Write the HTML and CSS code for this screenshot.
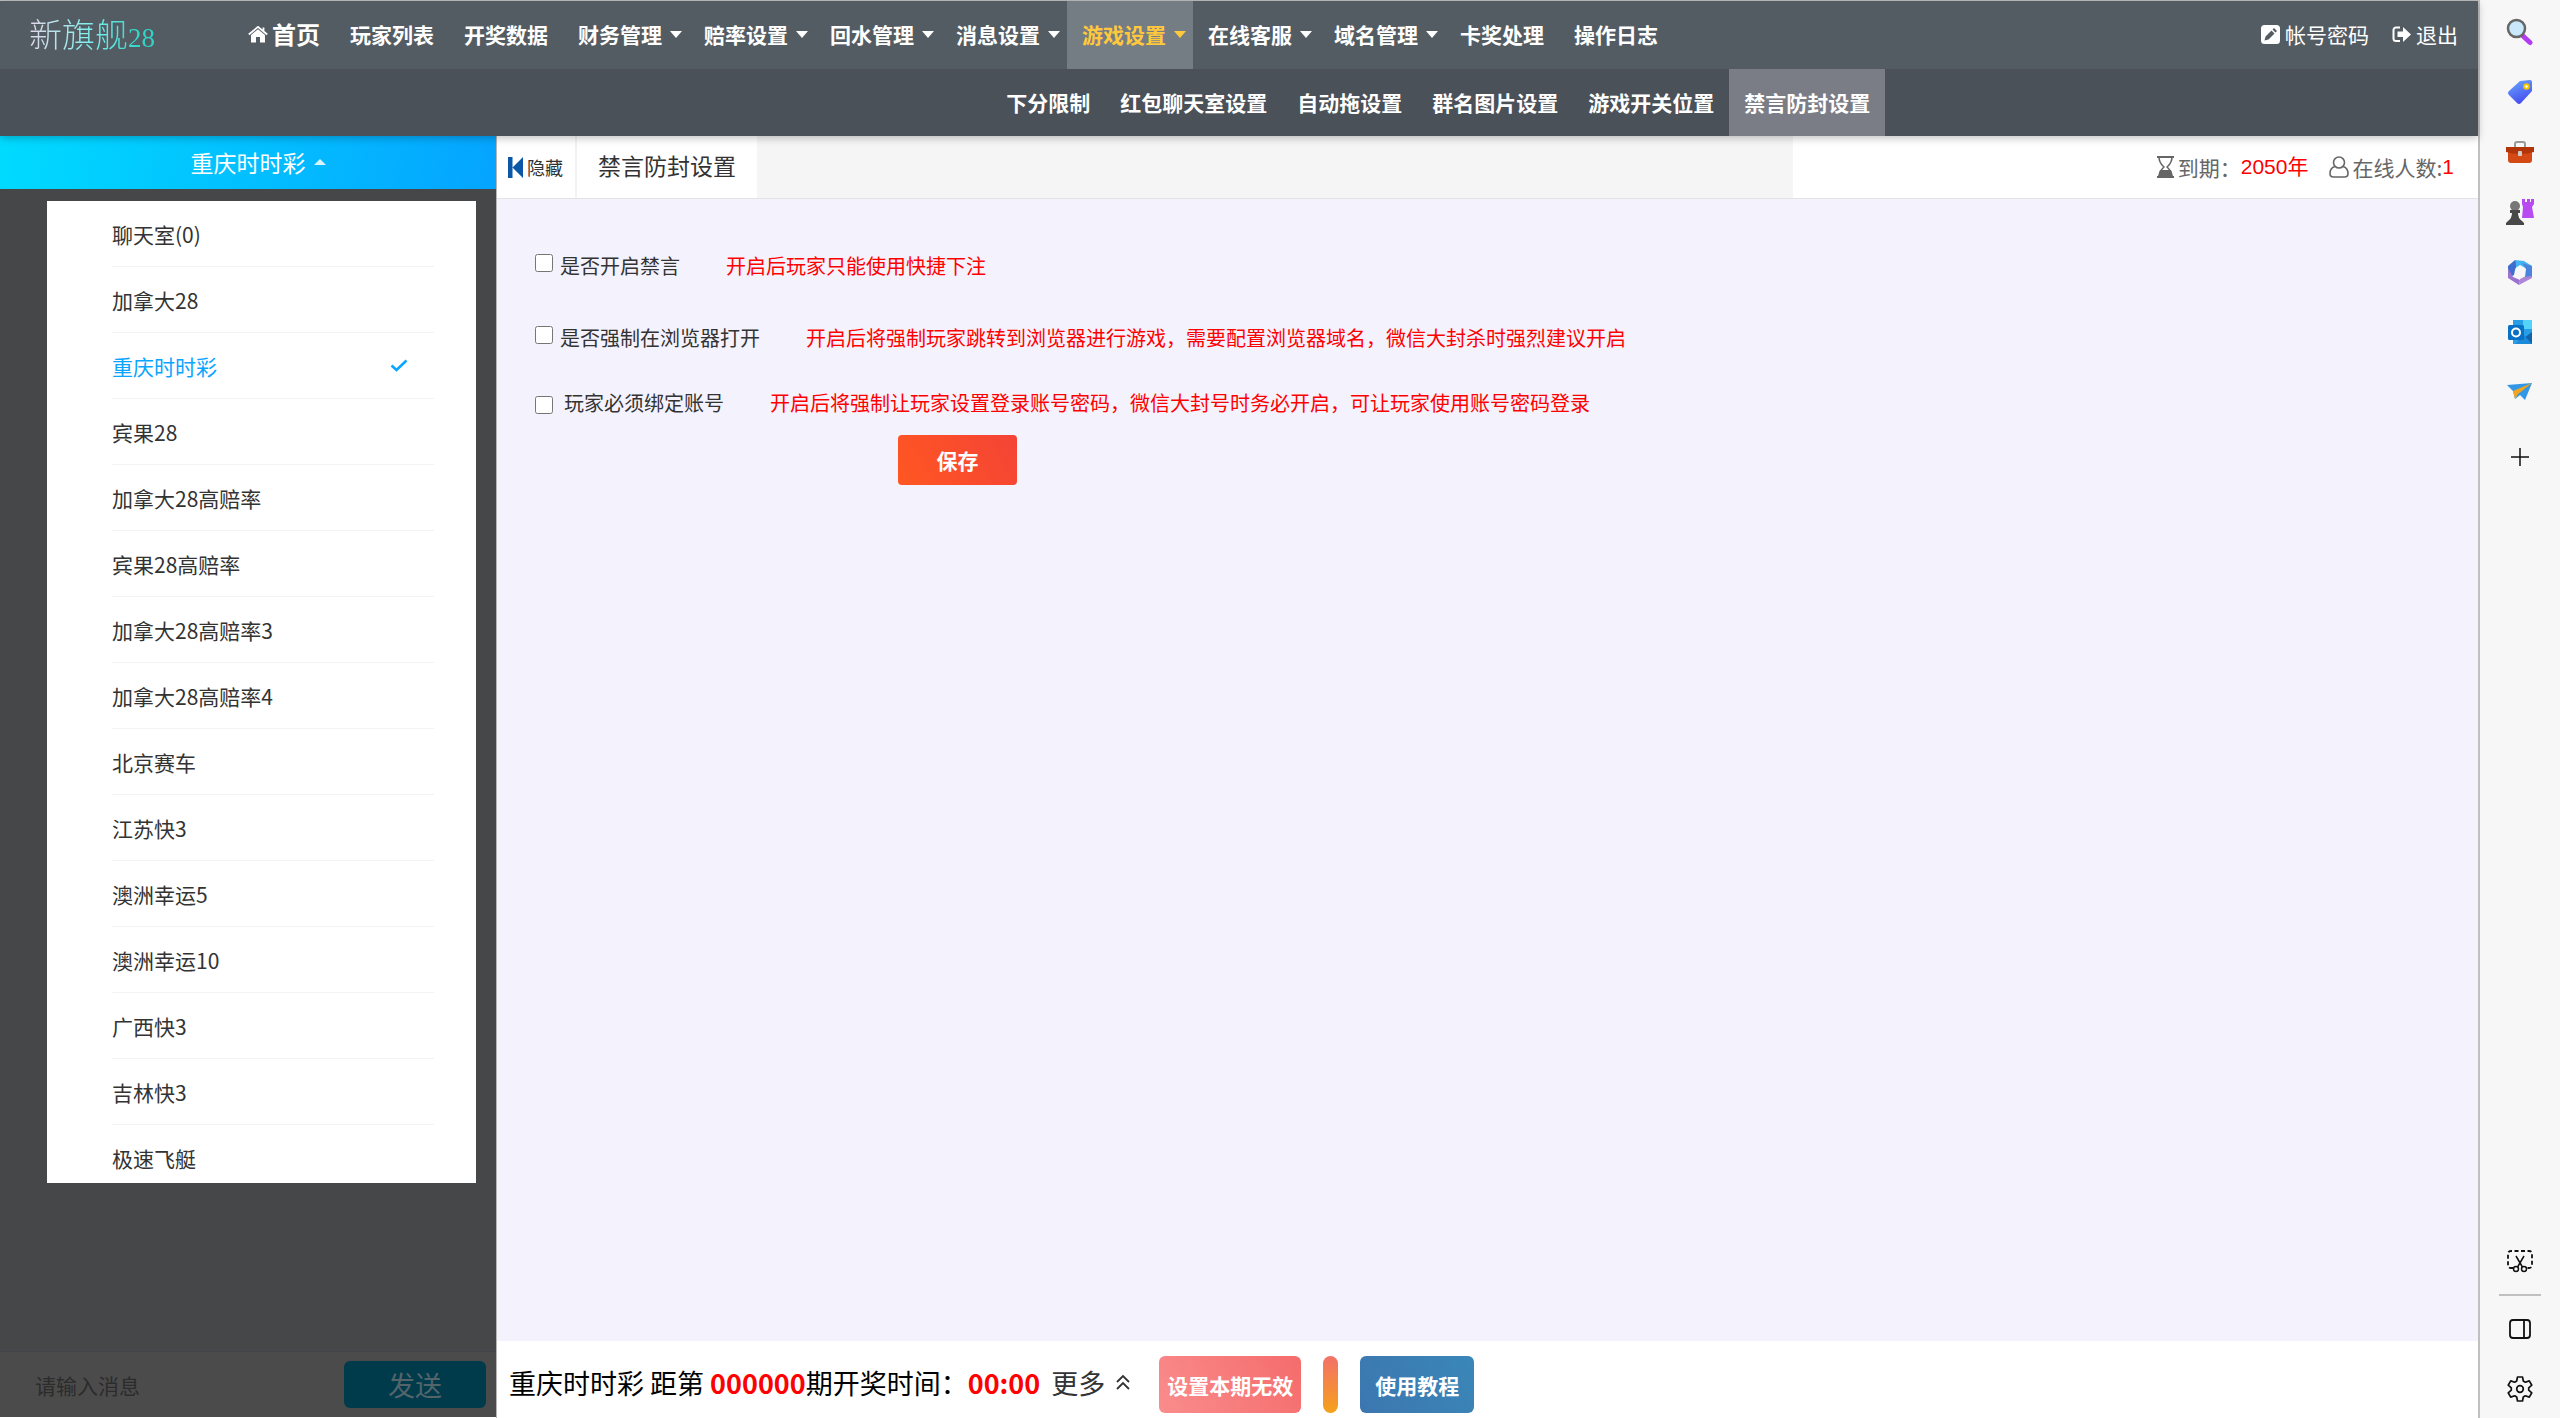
FILE: index.html
```html
<!DOCTYPE html>
<html lang="zh-CN">
<head>
<meta charset="utf-8">
<title>禁言防封设置</title>
<link rel="stylesheet" href="styles.css">
</head>
<body>
<div class="app">
  <header class="header">
    <div class="topbar">
      <div class="logo">新旗舰<span class="logo-num">28</span></div>
      <nav class="nav">
        <a class="nav-item nav-home" href="#"><svg width="20" height="17" viewBox="0 0 20 17"><path d="M10 3.2 3 9v7.5h5V11h4v5.500h5V9z" fill="#fff"/><path d="M.8 8.500 10 .9l9.200 7.600M15.500 1.500v4" fill="none" stroke="#fff" stroke-width="1.800"/></svg>首页</a>
        <a class="nav-item" href="#">玩家列表</a>
        <a class="nav-item" href="#">开奖数据</a>
        <a class="nav-item has-menu" href="#">财务管理</a>
        <a class="nav-item has-menu" href="#">赔率设置</a>
        <a class="nav-item has-menu" href="#">回水管理</a>
        <a class="nav-item has-menu" href="#">消息设置</a>
        <a class="nav-item has-menu active" href="#">游戏设置</a>
        <a class="nav-item has-menu" href="#">在线客服</a>
        <a class="nav-item has-menu" href="#">域名管理</a>
        <a class="nav-item" href="#">卡奖处理</a>
        <a class="nav-item" href="#">操作日志</a>
      </nav>
      <div class="account">
        <a href="#"><svg width="19" height="19" viewBox="0 0 19 19"><rect width="19" height="19" rx="3.500" fill="#fff"/><path d="m3.500 15.500 1-4 6-6 3 3-6 6zM11.500 4.500l1.500-1.500 3 3-1.500 1.500z" fill="#545c63"/></svg>帐号密码</a>
        <a href="#"><svg width="19" height="17" viewBox="0 0 19 17"><path d="M8 1.500H4A2.500 2.500 0 0 0 1.500 4v8.500A2.500 2.500 0 0 0 4 15h4" fill="none" stroke="#fff" stroke-width="2"/><path d="M5.500 5.500h5.500V1l8 7.500-8 7.500v-5H5.500z" fill="#fff"/></svg>退出</a>
      </div>
    </div>
    <nav class="subnav">
      <a href="#">下分限制</a>
      <a href="#">红包聊天室设置</a>
      <a href="#">自动拖设置</a>
      <a href="#">群名图片设置</a>
      <a href="#">游戏开关位置</a>
      <a class="active" href="#">禁言防封设置</a>
    </nav>
  </header>
  <div class="body">
    <aside class="side">
      <button class="side-head" type="button">重庆时时彩<span class="caret-up"></span></button>
      <ul class="games">
        <li><a href="#">聊天室(0)</a></li>
        <li><a href="#">加拿大28</a></li>
        <li class="current"><a href="#">重庆时时彩<svg width="18" height="14" viewBox="0 0 18 14"><path d="M1.500 6.500 6.500 11 16.500 1.500" fill="none" stroke="#0aa5ff" stroke-width="2.500"/></svg></a></li>
        <li><a href="#">宾果28</a></li>
        <li><a href="#">加拿大28高赔率</a></li>
        <li><a href="#">宾果28高赔率</a></li>
        <li><a href="#">加拿大28高赔率3</a></li>
        <li><a href="#">加拿大28高赔率4</a></li>
        <li><a href="#">北京赛车</a></li>
        <li><a href="#">江苏快3</a></li>
        <li><a href="#">澳洲幸运5</a></li>
        <li><a href="#">澳洲幸运10</a></li>
        <li><a href="#">广西快3</a></li>
        <li><a href="#">吉林快3</a></li>
        <li><a href="#">极速飞艇</a></li>
      </ul>
      <form class="chat">
        <input type="text" placeholder="请输入消息" aria-label="请输入消息">
        <button type="button">发送</button>
      </form>
    </aside>
    <main class="main">
      <div class="tabs">
        <button class="hide-btn" type="button"><svg width="16" height="21" viewBox="0 0 16 21"><path d="M0 0h4.500v21H0zM15 0v21L4.500 10.500z" fill="#0b56a6"/></svg>隐藏</button>
        <div class="tab">禁言防封设置</div>
        <div class="status">
          <span class="stat"><svg width="19" height="22" viewBox="0 0 19 22"><path d="M1 1h17M1 21h17" stroke="#666" stroke-width="2"/><path d="M3 1c0 6 3 8 5 10-2 2-5 4-5 10h13c0-6-3-8-5-10 2-2 5-4 5-10" fill="none" stroke="#666" stroke-width="1.500"/><path d="M4 14h11l2 7H2z" fill="#666"/></svg>到期：<b class="stat-value">2050年</b></span>
          <span class="stat"><svg width="20" height="22" viewBox="0 0 20 22"><g fill="none" stroke="#666" stroke-width="1.600"><circle cx="10" cy="6.500" r="5.500"/><path d="M6 10.500c-3.500 1-5 3.500-5 7 0 2.500 1.500 3.500 3.500 3.500h11c2 0 3.500-1 3.500-3.500 0-3.500-1.500-6-5-7"/></g></svg>在线人数:<b class="stat-value">1</b></span>
        </div>
      </div>
      <form class="settings">
        <div class="setting"><input type="checkbox" id="mute"><label for="mute">是否开启禁言</label><span class="hint">开启后玩家只能使用快捷下注</span></div>
        <div class="setting"><input type="checkbox" id="browser"><label for="browser">是否强制在浏览器打开</label><span class="hint">开启后将强制玩家跳转到浏览器进行游戏，需要配置浏览器域名，微信大封杀时强烈建议开启</span></div>
        <div class="setting setting-bind"><input type="checkbox" id="bind"><label for="bind">玩家必须绑定账号</label><span class="hint">开启后将强制让玩家设置登录账号密码，微信大封号时务必开启，可让玩家使用账号密码登录</span></div>
        <button class="save" type="button">保存</button>
      </form>
      <footer class="footer">
        <div class="draw">重庆时时彩 距第 <b>000000</b>期开奖时间：<b>00:00</b></div>
        <a class="more" href="#">更多<svg width="16" height="17" viewBox="0 0 16 17"><path d="m2 8 6-6 6 6M2 15l6-6 6 6" fill="none" stroke="#333" stroke-width="1.800"/></svg></a>
        <button class="btn btn-void" type="button">设置本期无效</button>
        <button class="btn-pill" type="button" aria-label="开关"></button>
        <button class="btn btn-guide" type="button">使用教程</button>
      </footer>
    </main>
  </div>
</div>
<aside class="rail">
  <svg width="28" height="28" viewBox="0 0 28 28"><path d="m17 18 7 6.500" stroke="#b23cf0" stroke-width="5" stroke-linecap="round"/><circle cx="10.500" cy="10.500" r="8.500" fill="#c9e8fb" stroke="#666" stroke-width="2.500"/></svg>
  <svg width="28" height="28" viewBox="0 0 28 28"><defs><linearGradient id="tag" x2=".4" y2="1"><stop stop-color="#6aabff"/><stop offset="1" stop-color="#4650ef"/></linearGradient></defs><path d="M14 3 24 2q2 0 2 2v9L15 25q-2 2-4 0l-8-8q-2-2 0-4z" fill="url(#tag)"/><circle cx="20.500" cy="8.500" r="2.300" fill="#fff" stroke="#f5c400" stroke-width="2"/></svg>
  <svg width="28" height="28" viewBox="0 0 28 28"><path d="M9 9V6q0-2 2-2h6q2 0 2 2v3" fill="none" stroke="#999" stroke-width="2"/><path d="M2 11h24v11q0 3-3 3H5q-3 0-3-3z" fill="#d54a14"/><path d="M0 9h28v5q-14 4-28 0z" fill="#b23409"/><rect x="12" y="13" width="4" height="5" rx="1" fill="#ccc"/></svg>
  <svg width="28" height="28" viewBox="0 0 28 28"><path d="M16 1h3v3h2V1h3v3h1V1h3v5l-2 3 2 11H16l1-11-1-3z" fill="#b84af2"/><circle cx="9" cy="8" r="5" fill="#777"/><path d="M4 12h10v3h-2q0 5 4 8l2 2v2H0v-2l2-2q4-3 4-8H4z" fill="#484848"/></svg>
  <svg width="28" height="28" viewBox="0 0 28 28"><path d="M9 2 18 3l8 5v9l-5-6-7-4-6 4z" fill="#43b5f3"/><path d="M2 8 9 2q2 6 0 10l-1 5-6 3z" fill="#3f6fcd"/><path d="m2 10 5 9 7 3-1 5L2 20z" fill="#9a72cf"/><path d="m13 27 1-6 6-3 6-2v4z" fill="#ad86d8"/><path d="m26 8v10l-7 1 1-8-4-6z" fill="#4b84dc"/><circle cx="14" cy="14.500" r="4.500" fill="#f7f7f7"/></svg>
  <svg width="28" height="28" viewBox="0 0 28 28"><path d="M7 2h19v24H7z" fill="#279ee5"/><path d="M17 2h9v9h-9z" fill="#54d3fa"/><path d="m10 26 16-12v12z" fill="#1264a9"/><path d="m17 16 9 10H10z" fill="#1c89d9"/><rect x="2" y="7" width="16" height="15" rx="1.500" fill="#0870c5"/><circle cx="10" cy="14.500" r="4" fill="none" stroke="#fff" stroke-width="2"/></svg>
  <svg width="28" height="28" viewBox="0 0 28 28"><path d="m1 7 25-2-7 17-5-5-5 4-2-8z" fill="#3397e8"/><path d="M26 5 7 13l2 8 3-5z" fill="#f5a51d"/></svg>
  <svg class="rail-add" width="20" height="20" viewBox="0 0 20 20"><path d="M10 1v18M1 10h18" stroke="#111" stroke-width="1.500"/></svg>
  <div class="rail-tools">
    <svg width="28" height="26" viewBox="0 0 28 26"><path d="M7 20H5q-3 0-3-3V6q0-3 3-3h18q3 0 3 3v11q0 3-3 3h-2" fill="none" stroke="#111" stroke-width="1.800" stroke-dasharray="4 2.500"/><path d="m10 8 7 12M18 8l-7 12" stroke="#111" stroke-width="1.500"/><circle cx="10" cy="21" r="2.500" fill="#f7f7f7" stroke="#111" stroke-width="1.500"/><circle cx="18" cy="21" r="2.500" fill="#f7f7f7" stroke="#111" stroke-width="1.500"/></svg>
    <hr>
    <svg width="24" height="20" viewBox="0 0 24 20"><path d="M5 1h14q3 0 3 3v12q0 3-3 3H5q-3 0-3-3V4q0-3 3-3zM16 1v18" fill="none" stroke="#111" stroke-width="1.800"/></svg>
    <svg width="28" height="28" viewBox="0 0 28 28"><path d="M11.500 2h5l.8 4 2 1.200 4-1.300 2.500 4.300-3.100 2.700v2.200l3.100 2.700-2.500 4.300-4-1.300-2 1.200-.8 4h-5l-.8-4-2-1.200-4 1.300-2.500-4.300 3.100-2.700v-2.200L2.200 10.200l2.500-4.300 4 1.300 2-1.200z" fill="none" stroke="#111" stroke-width="1.700" stroke-linejoin="round"/><circle cx="14" cy="14" r="3.300" fill="none" stroke="#111" stroke-width="1.700"/></svg>
  </div>
</aside>
</body>
</html>
```
FILE: styles.css
```css
* { box-sizing: border-box; }
body {
  margin: 0;
  display: flex;
  min-height: 100vh;
  font-family: "Noto Sans CJK SC", sans-serif;
  font-size: 21px;
  line-height: 30px;
  color: #333;
  background: #fff;
}
a { color: inherit; text-decoration: none; }
button, input { font: inherit; color: inherit; border: 0; padding: 0; margin: 0; }
button { cursor: pointer; }
svg { flex: none; display: block; }

.app {
  flex: 1;
  min-width: 0;
  display: flex;
  flex-direction: column;
  border-top: 1px solid #c0c0c0;
}

/* header */
.header { position: relative; z-index: 1; color: #fff; box-shadow: 0 2px 8px rgba(0, 0, 0, .25); }
.topbar { display: flex; height: 68px; background: #545c63; }
.logo {
  flex: 0 0 233px;
  padding-left: 29px;
  font-size: 33px;
  font-weight: 300;
  line-height: 64px;
  color: transparent;
  background: linear-gradient(90deg, #e0d8e8 30px, #7ff0ee 90px, #2fd6c8 140px);
  -webkit-background-clip: text;
  background-clip: text;
}
.logo-num { font-family: "Liberation Serif", serif; font-size: 27px; }
.nav { display: flex; font-weight: 700; }
.nav-item { display: flex; align-items: center; padding: 0 15px 2px; white-space: nowrap; }
.nav-home { gap: 4px; font-size: 24px; }
.has-menu { padding-right: 7px; }
.has-menu::after {
  content: "";
  margin-left: 8px;
  border: 6px solid transparent;
  border-top: 7px solid currentColor;
  border-bottom: 0;
}
.nav-item.active { color: #ffc83d; background: #757d84; }
.account { display: flex; gap: 23px; margin-left: auto; padding: 0 20px 2px 0; }
.account a { display: flex; align-items: center; gap: 5px; }
.subnav { display: flex; height: 67px; padding-left: 40%; background: #4a5158; font-weight: 700; }
.subnav a { padding: 0 15px; line-height: 66px; white-space: nowrap; }
.subnav .active { background: #7b7d86; }

/* game sidebar */
.body { flex: 1; display: flex; }
.side {
  flex: 0 0 497px;
  display: flex;
  flex-direction: column;
  background: #464749;
  border-right: 1px solid #b5b5b5;
}
.side-head {
  display: flex;
  align-items: center;
  justify-content: center;
  gap: 8px;
  height: 53px;
  padding: 0 0 2px 20px;
  font-size: 23px;
  color: #fff;
  background: linear-gradient(100deg, #00dbff, #05a4ff);
}
.caret-up { border: 6px solid transparent; border-bottom: 6px solid #d9f4ff; border-top: 0; }
.games {
  list-style: none;
  margin: 12px 20px 0 47px;
  padding: 0 42px 0 65px;
  max-height: 982px;
  overflow: hidden;
  background: #fff;
}
.games a {
  display: flex;
  align-items: center;
  justify-content: space-between;
  height: 66px;
  padding-right: 26px;
  border-bottom: 1px solid #f3f3f3;
}
.games .current { color: #0aa5ff; }
.chat {
  display: flex;
  align-items: center;
  height: 67px;
  margin-top: auto;
  padding: 0 10px 0 35px;
  background: #4b4b4b;
  border-top: 1px solid #40444a;
  border-bottom: 1px solid #fff;
}
.chat input { flex: 1; min-width: 0; height: 46px; background: none; outline: 0; }
.chat input::placeholder { color: #2c2c2c; opacity: 1; }
.chat button { width: 142px; height: 47px; border-radius: 6px; font-size: 27px; color: #53656a; background: #003b4c; }

/* main column */
.main { flex: 1; min-width: 0; display: flex; flex-direction: column; background: #f4f2fc; }
.tabs { display: flex; height: 63px; background: #f5f5f5; border-bottom: 1px solid #e3e3e3; }
.hide-btn {
  display: flex;
  align-items: center;
  gap: 3px;
  padding: 0 12px 0 11px;
  font-size: 18px;
  background: #fff;
  border-right: 2px solid #f2f2f2;
}
.tab { padding: 0 21px; font-size: 23px; line-height: 58px; background: #fff; }
.status {
  display: flex;
  justify-content: flex-end;
  flex: 0 0 685px;
  gap: 21px;
  margin-left: auto;
  padding-right: 24px;
  color: #666;
  background: #fff;
}
.stat { display: flex; align-items: center; }
.stat svg { margin-right: 3px; }
.stat-value { font-family: "Liberation Sans", "Noto Sans CJK SC", sans-serif; font-weight: 400; color: #f00; }
.settings { flex: 1; padding: 31px 38px; }
.setting { display: flex; align-items: center; height: 72px; font-size: 20px; }
.setting input { width: 18px; height: 18px; margin: 0 7px 6px 0; }
.setting-bind { height: 58px; }
.setting-bind input { margin: 4px 11px 0 0; }
.hint { margin-left: 46px; color: #f00; }
.save {
  display: block;
  width: 119px;
  height: 50px;
  margin: 3px 0 0 363px;
  border-radius: 4px;
  font-weight: 700;
  color: #fff;
  background: linear-gradient(60deg, #ff5722, #f44336);
}
.footer { display: flex; align-items: center; height: 77px; padding: 6px 0 0 12px; background: #fff; }
.draw { font-size: 27px; color: #000; white-space: nowrap; }
.draw b { color: #f00; }
.more { display: flex; align-items: center; gap: 10px; margin: 0 28px 0 11px; font-size: 27px; }
.btn { height: 57px; padding: 0 8px; border-radius: 6px; font-weight: 700; color: #fff; }
.btn-void { background: linear-gradient(60deg, #fa8c8c, #f56c6c); }
.btn-pill { width: 15px; height: 57px; margin: 0 22px; border-radius: 8px; background: linear-gradient(#f3716a, #f5a11a); }
.btn-guide { padding: 0 15px; background: linear-gradient(60deg, #3c76b0, #3a87b8); }
.footer .btn, .btn-pill { margin-top: 4px; }

/* browser rail */
.rail {
  flex: 0 0 82px;
  display: flex;
  flex-direction: column;
  align-items: center;
  gap: 32px;
  padding-top: 18px;
  background: #f7f7f7;
  border-left: 2px solid #c0c0c0;
}
.rail-add { margin-top: 9px; }
.rail-tools { display: flex; flex-direction: column; align-items: center; margin-top: auto; padding-bottom: 15px; }
.rail-tools hr { width: 42px; height: 2px; margin: 20px 0 23px; border: 0; background: #c0c0c0; }
.rail-tools svg + svg { margin-top: 36px; }
```
